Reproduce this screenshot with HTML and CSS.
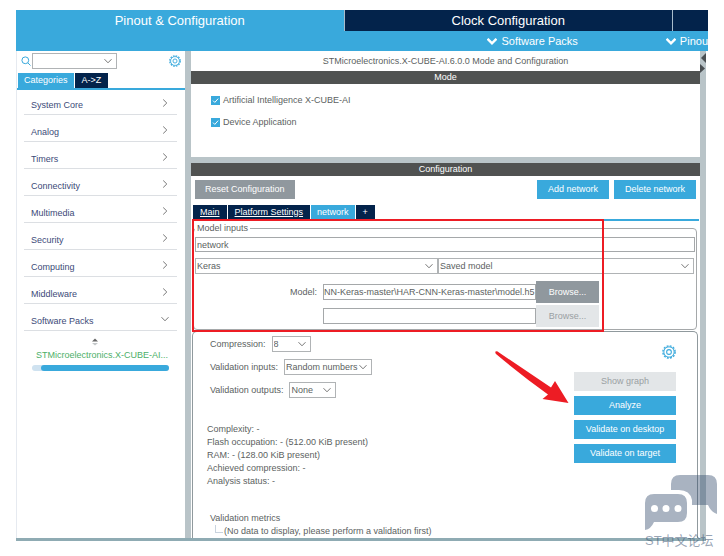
FILE: index.html
```html
<!DOCTYPE html>
<html lang="en">
<head>
    <meta charset="UTF-8">
    <meta name="viewport" content="width=device-width, initial-scale=1.0">
    <title>Pinout &amp; Configuration</title>
    <link rel="stylesheet" href="styles.css">
</head>
<body>
    <!-- shared icons -->
    <svg class="defs" width="0" height="0">
        <symbol id="chevron" viewBox="0 0 8 8"><path d="M0.5 2.2 L4 5.8 L7.5 2.2" fill="none" stroke="currentColor"/></symbol>
        <symbol id="chevron-right" viewBox="0 0 8 8"><path d="M2.2 0.5 L5.8 4 L2.2 7.5" fill="none" stroke="currentColor"/></symbol>
        <symbol id="gear" viewBox="0 0 16 16">
            <circle cx="8" cy="8" r="7" fill="none" stroke="currentColor" stroke-width="1.6" stroke-dasharray="2.2 1.465"/>
            <circle cx="8" cy="8" r="5.9" fill="none" stroke="currentColor" stroke-width="1.1"/>
            <circle cx="8" cy="8" r="2.7" fill="none" stroke="currentColor" stroke-width="1.2"/>
        </symbol>
    </svg>

    <div class="window">
        <div class="top-tabs">
            <div class="top-tab active">Pinout &amp; Configuration</div>
            <div class="top-tab">Clock Configuration</div>
            <div class="top-tab"></div>
        </div>
        <div class="sub-nav">
            <div class="sub-item"><svg><use href="#chevron"/></svg>Software Packs</div>
            <div class="sub-item last"><svg><use href="#chevron"/></svg>Pinou</div>
        </div>

        <div class="workspace">
            <div class="sidebar">
                <div class="search-row">
                    <svg class="search-icon" viewBox="0 0 10 10"><circle cx="4.3" cy="4.3" r="3.4"/><path d="M6.8 6.8 L9.5 9.5"/></svg>
                    <div class="select search">
                        <select aria-label="Search"><option></option></select>
                        <svg><use href="#chevron"/></svg>
                    </div>
                    <button class="gear" aria-label="Settings"><svg><use href="#gear"/></svg></button>
                </div>
                <div class="side-tabs">
                    <button class="side-tab active">Categories</button>
                    <button class="side-tab">A-&gt;Z</button>
                </div>
                <div class="categories">
                    <div class="category">System Core<svg><use href="#chevron-right"/></svg></div>
                    <div class="category">Analog<svg><use href="#chevron-right"/></svg></div>
                    <div class="category">Timers<svg><use href="#chevron-right"/></svg></div>
                    <div class="category">Connectivity<svg><use href="#chevron-right"/></svg></div>
                    <div class="category">Multimedia<svg><use href="#chevron-right"/></svg></div>
                    <div class="category">Security<svg><use href="#chevron-right"/></svg></div>
                    <div class="category">Computing<svg><use href="#chevron-right"/></svg></div>
                    <div class="category">Middleware<svg><use href="#chevron-right"/></svg></div>
                    <div class="category">Software Packs<svg><use href="#chevron"/></svg></div>
                </div>
                <div class="packs">
                    <svg class="sorter" viewBox="0 0 6 8"><path d="M0 3.5 L3 0.5 L6 3.5Z" fill="#666"/><path d="M0 5 L3 7.5 L6 5Z" fill="#c4c8ca"/></svg>
                    <div class="pack">STMicroelectronics.X-CUBE-AI...</div>
                    <div class="scrollbar"><div class="thumb"></div></div>
                </div>
            </div>

            <div class="main">
                <div class="main-title">STMicroelectronics.X-CUBE-AI.6.0.0 Mode and Configuration</div>
                <div class="bar">Mode</div>
                <div class="mode">
                    <label class="check"><input type="checkbox" checked><svg viewBox="0 0 9 9"><path d="M2 4.6 L3.8 6.4 L7.2 2.6"/></svg>Artificial Intelligence X-CUBE-AI</label>
                    <label class="check"><input type="checkbox" checked><svg viewBox="0 0 9 9"><path d="M2 4.6 L3.8 6.4 L7.2 2.6"/></svg>Device Application</label>
                </div>
                <div class="divider"></div>
                <div class="bar">Configuration</div>
                <div class="toolbar">
                    <button class="btn gray">Reset Configuration</button>
                    <button class="btn add">Add network</button>
                    <button class="btn">Delete network</button>
                </div>
                <div class="net-tabs">
                    <button class="net-tab linked">Main</button>
                    <button class="net-tab linked">Platform Settings</button>
                    <button class="net-tab active">network</button>
                    <button class="net-tab">+</button>
                </div>

                <div class="config">
                    <fieldset class="inputs">
                        <legend>Model inputs</legend>
                        <input class="field name" type="text" value="network" aria-label="Network name">
                        <div class="pair">
                            <div class="select">
                                <select aria-label="Framework"><option>Keras</option></select>
                                <svg><use href="#chevron"/></svg>
                            </div>
                            <div class="select">
                                <select aria-label="Model type"><option>Saved model</option></select>
                                <svg><use href="#chevron"/></svg>
                            </div>
                        </div>
                        <div class="files">
                            <label for="model">Model:</label>
                            <input class="field" id="model" type="text" value="NN-Keras-master\HAR-CNN-Keras-master\model.h5">
                            <button class="btn gray">Browse...</button>
                            <span></span>
                            <input class="field" type="text" aria-label="Second model file">
                            <button class="btn" disabled>Browse...</button>
                        </div>
                    </fieldset>

                    <div class="analysis">
                        <div class="options">
                            <div class="option">
                                <label for="compression">Compression:</label>
                                <div class="select compression">
                                    <select id="compression"><option>8</option></select>
                                    <svg><use href="#chevron"/></svg>
                                </div>
                            </div>
                            <div class="option">
                                <label for="val-in">Validation inputs:</label>
                                <div class="select val-in">
                                    <select id="val-in"><option>Random numbers</option></select>
                                    <svg><use href="#chevron"/></svg>
                                </div>
                            </div>
                            <div class="option">
                                <label for="val-out">Validation outputs:</label>
                                <div class="select val-out">
                                    <select id="val-out"><option>None</option></select>
                                    <svg><use href="#chevron"/></svg>
                                </div>
                            </div>
                            <div class="stats">
                                <div>Complexity: -</div>
                                <div>Flash occupation: - (512.00 KiB present)</div>
                                <div>RAM: - (128.00 KiB present)</div>
                                <div>Achieved compression: -</div>
                                <div>Analysis status: -</div>
                            </div>
                            <div class="metrics">
                                <div>Validation metrics</div>
                                <div class="leaf">(No data to display, please perform a validation first)</div>
                            </div>
                        </div>
                        <div class="actions">
                            <button class="gear" aria-label="Analysis settings"><svg><use href="#gear"/></svg></button>
                            <button class="btn" disabled>Show graph</button>
                            <button class="btn">Analyze</button>
                            <button class="btn">Validate on desktop</button>
                            <button class="btn">Validate on target</button>
                        </div>
                    </div>

                    <div class="highlight"></div>
                    <svg class="arrow" viewBox="0 0 75 54"><path d="M0.5 0.5 Q2 -0.5 4 1.5 L56 36.5 L60 30 L73.5 52 L47.5 48 L53 43.5 Q26 24 1 3 Q0 2 0.5 0.5Z"/></svg>
                </div>
            </div>

            <div class="rail">
                <svg viewBox="0 0 6 22"><path d="M6 1 V11 L1 6Z"/><path d="M0 12 V21 L5 16.5Z"/></svg>
            </div>
        </div>

        <div class="watermark">
            <svg viewBox="0 0 72 56">
                <path d="M35 0 H63 Q72 0 72 9 V39 Q66 37 63 30 H47 V25 Q45 15 34 15 H26 V9 Q26 0 35 0Z"/>
                <path fill-rule="evenodd" d="M9 19 H33 Q42 19 42 28 V38 Q42 47 33 47 H9 Q6 54 0 55 V28 Q0 19 9 19Z M6 33.500 a3.500 3.500 0 1 0 7 0 a3.500 3.500 0 1 0 -7 0Z M17.500 33.500 a3.500 3.500 0 1 0 7 0 a3.500 3.500 0 1 0 -7 0Z M29.500 33.500 a3.500 3.500 0 1 0 7 0 a3.500 3.500 0 1 0 -7 0Z"/>
            </svg>
            <div>ST中文论坛</div>
        </div>
    </div>
</body>
</html>
```
FILE: styles.css
```css
:root {
    --blue: #39a9dc;
    --navy: #03234b;
    --gray: #90989e;
    --light: #e3e6e8;
    --rail: #b9c4c8;
    --bar: #505251;
    --text: #5c5f61;
    --red: #ed1c24;
}
* {
    box-sizing: border-box;
}
body {
    margin: 0;
    padding: 10px 16px;
    background-color: #fff;
    color: var(--text);
    font-family: "Liberation Sans", Arial, "Noto Sans CJK SC", sans-serif;
    font-size: 9px;
    line-height: 13px;
}
button, input, select {
    font: inherit;
    color: inherit;
    margin: 0;
    padding: 0;
    border: none;
    border-radius: 0;
    background: none;
}
svg {
    display: block;
    width: 8px;
    height: 8px;
    flex-shrink: 0;
}
.defs {
    position: absolute;
    width: 0;
    height: 0;
}
.window {
    position: relative;
}

/* header */
.top-tabs {
    display: grid;
    grid-template-columns: 1fr 1fr 35px;
    gap: 1px;
    background-color: #a9bccb;
}
.top-tab {
    height: 21px;
    line-height: 21px;
    text-align: center;
    font-size: 13px;
    color: #fff;
    background-color: var(--navy);
}
.top-tab.active {
    background-color: var(--blue);
}
.sub-nav {
    display: flex;
    justify-content: flex-end;
    overflow: hidden;
    height: 20px;
    color: #fff;
    background-color: var(--blue);
    font-size: 11px;
    line-height: 20px;
}
.sub-item {
    display: flex;
    align-items: center;
    gap: 4px;
    margin-right: 88px;
}
.sub-item.last {
    margin-right: 0;
}
.sub-item svg {
    width: 10px;
    height: 10px;
    stroke-width: 2;
}

/* sidebar */
.workspace {
    display: flex;
    margin-right: 2px;
    border-bottom: 3px solid #8fabb3;
}
.sidebar {
    width: 169px;
    flex-shrink: 0;
    border-left: 1px solid #e6eaf0;
}
.search-row {
    display: flex;
    align-items: center;
    padding: 2px 4px;
}
.search-icon {
    width: 10px;
    height: 10px;
    margin-right: 1px;
    fill: none;
    stroke: var(--blue);
}
.select {
    position: relative;
    border: 1px solid #b0b3b5;
}
.select select {
    display: block;
    width: 100%;
    height: 14px;
    padding-left: 1px;
    appearance: none;
}
.select svg {
    position: absolute;
    right: 4px;
    top: 3px;
    color: #777;
    pointer-events: none;
}
.search {
    width: 85px;
}
.gear {
    margin-left: auto;
    color: var(--blue);
}
.gear svg {
    width: 12px;
    height: 12px;
}
.side-tabs {
    display: flex;
    gap: 1px;
    padding: 2px 1px 0;
    border-bottom: 2px solid var(--blue);
}
.side-tab {
    height: 15px;
    padding: 0 7px;
    color: #fff;
    background-color: var(--navy);
}
.side-tab.active {
    padding: 0 6px;
    background-color: var(--blue);
}
.categories {
    display: flex;
    flex-direction: column;
    gap: 10px;
    padding: 8px 8px 0 7px;
}
.category {
    display: flex;
    justify-content: space-between;
    padding: 1px 8px 2px 7px;
    color: #3c4a78;
    border-bottom: 1px solid #dcdfe3;
}
.category svg {
    color: #777;
}
.packs {
    padding: 7px 16px 0 15px;
}
.sorter {
    width: 6px;
    height: 8px;
    margin-left: 60px;
}
.pack {
    padding: 3px 0 3px 4px;
    color: #4caf68;
    white-space: nowrap;
}
.scrollbar {
    height: 6px;
    padding-left: 9px;
    border-radius: 3px;
    background-color: #cfe2f0;
}
.thumb {
    height: 6px;
    border-radius: 3px;
    background-color: var(--blue);
}

/* main area */
.main {
    flex-grow: 1;
    min-width: 0;
    border-left: 6px solid var(--rail);
}
.main-title {
    line-height: 20px;
    text-align: center;
}
.bar {
    line-height: 13px;
    text-align: center;
    color: #fff;
    background-color: var(--bar);
}
.mode {
    display: flex;
    flex-direction: column;
    gap: 9px;
    padding: 10px 20px 28px;
}
.check {
    display: flex;
    align-items: center;
    position: relative;
}
.check input {
    width: 9px;
    height: 9px;
    margin-right: 3px;
    appearance: none;
    background-color: var(--blue);
}
.check svg {
    position: absolute;
    left: 0;
    top: 2px;
    width: 9px;
    height: 9px;
    fill: none;
    stroke: #fff;
    pointer-events: none;
}
.divider {
    height: 6px;
    background-color: var(--rail);
}
.btn {
    height: 19px;
    padding: 0 11px;
    color: #fff;
    background-color: var(--blue);
}
.btn.gray {
    padding: 0 10px;
    background-color: var(--gray);
}
.btn:disabled {
    color: #9a9fa3;
    background-color: var(--light);
}
.toolbar {
    display: flex;
    gap: 5px;
    padding: 4px 4px 6px;
}
.add {
    margin-left: auto;
}
.net-tabs {
    display: flex;
    gap: 1px;
    margin: 0 1px 0 2px;
    border-bottom: 2px solid var(--blue);
}
.net-tab {
    height: 14px;
    padding: 0 7px;
    color: #fff;
    background-color: var(--navy);
}
.net-tab.linked {
    text-decoration: underline;
}
.net-tab.active {
    padding: 0 6px;
    background-color: var(--blue);
}
.config {
    position: relative;
    padding: 1px 2px 0 1px;
}
.inputs {
    margin: 0 1px 1px;
    padding: 2px 1px 2px;
    min-width: 0;
    border: 1px solid #a5a8aa;
    border-radius: 4px;
}
.inputs legend {
    padding: 0 2px;
}
.field {
    width: 100%;
    height: 16px;
    padding: 0 1px;
    border: 1px solid #a5a8aa;
}
.field.name {
    display: block;
    height: 15px;
}
.pair {
    display: grid;
    grid-template-columns: 243px 1fr;
    margin: 6px 1px 7px 0;
}
.files {
    display: grid;
    grid-template-columns: 128px 213px 63px;
    align-items: center;
    row-gap: 2px;
}
.files label {
    padding-right: 6px;
    text-align: right;
}
.files .field {
    padding: 0;
}
.files .btn {
    height: 22px;
}
.analysis {
    display: flex;
    justify-content: space-between;
    padding: 4px 21px 0 14px;
    border: 1px solid #90999d;
    border-bottom: none;
    border-radius: 5px 5px 0 0;
}
.option {
    display: flex;
    align-items: center;
    gap: 6px;
    margin: 0 0 7px 3px;
}
.compression {
    width: 39px;
}
.val-in {
    width: 88px;
}
.val-out {
    width: 47px;
}
.stats {
    margin-top: 25px;
}
.metrics {
    margin: 24px 0 0 3px;
}
.leaf {
    position: relative;
    padding-left: 14px;
}
.leaf::before {
    content: "";
    position: absolute;
    left: 5px;
    top: 0;
    width: 7px;
    height: 7px;
    border-left: 1px solid #c9d3de;
    border-bottom: 1px solid #c9d3de;
}
.actions {
    display: flex;
    flex-direction: column;
    gap: 5px;
    width: 102px;
    padding-top: 9px;
}
.actions .gear {
    margin-bottom: 8px;
}
.actions .gear svg {
    width: 14px;
    height: 14px;
}

/* red markup over the form */
.highlight {
    position: absolute;
    left: 1px;
    top: -2px;
    width: 412px;
    height: 113px;
    border: 2px solid var(--red);
}
.arrow {
    position: absolute;
    left: 304px;
    top: 130px;
    width: 75px;
    height: 54px;
    fill: var(--red);
}
.rail {
    width: 6px;
    flex-shrink: 0;
    padding-top: 1px;
    background-color: var(--rail);
}
.rail svg {
    width: 6px;
    height: 22px;
    fill: #4a4f52;
}
.watermark {
    position: absolute;
    right: -9px;
    bottom: -10px;
    color: rgba(50, 75, 108, 0.5);
    font-size: 13px;
    line-height: 20px;
}
.watermark svg {
    width: 72px;
    height: 56px;
    fill: rgba(50, 75, 108, 0.42);
}
```
